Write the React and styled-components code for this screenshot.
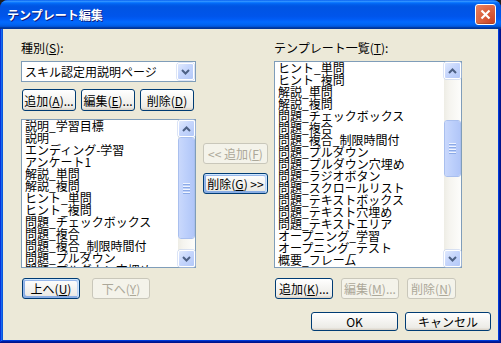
import React from 'react';
import styled, { createGlobalStyle } from 'styled-components';

const GlobalStyle = createGlobalStyle`
  html, body {
    margin: 0;
    padding: 0;
    background: #1e1e1e;
  }
  body {
    font-family: "Noto Sans CJK JP", "Noto Sans", sans-serif;
    font-size: 12px;
    color: #000;
  }
  #root {
    width: 501px;
    height: 343px;
  }
`;

const Window = styled.div`
  width: 501px;
  height: 343px;
  display: flex;
  flex-direction: column;
  border-radius: 8px 8px 0 0;
  overflow: hidden;
  background: #0831d9;
`;

const TitleBar = styled.div`
  flex: none;
  height: 29px;
  display: flex;
  align-items: center;
  justify-content: space-between;
  padding: 0 5px 0 7px;
  background: linear-gradient(180deg, #0058ee 0%, #3593ff 4%, #288eff 6%, #127dff 8%, #036ffc 10%, #0262ee 14%, #0057e5 20%, #0054e3 24%, #0055eb 56%, #005bf5 66%, #026afe 76%, #0062ef 86%, #0052d6 92%, #0040ab 94%, #003092 100%);
`;

const Title = styled.span`
  color: #fff;
  font-weight: bold;
  font-size: 12px;
  text-shadow: 1px 1px 0 #0f1b7a;
`;

const CloseButton = styled.div`
  width: 21px;
  height: 21px;
  box-sizing: border-box;
  border: 1px solid #fff;
  border-radius: 3px;
  display: flex;
  align-items: center;
  justify-content: center;
  background: radial-gradient(circle at 85% 85%, #cc4628 0%, #dc6542 55%, #e98567 100%);
  box-shadow: inset 0 -1px 1px rgba(0, 0, 0, 0.2);
`;

const Frame = styled.div`
  flex: 1;
  display: flex;
  padding: 0 3px 3px 3px;
  box-shadow: inset -1px -1px #00138c, inset 1px 0 #0831d9, inset -2px -2px #001ea0,
    inset 2px 0 #166aee, inset -3px -3px #003bda, inset 3px 0 #0855dd;
`;

const Body = styled.div`
  flex: 1;
  background: #ece9d8;
  display: flex;
  flex-direction: column;
  padding: 12px 7px 0 18px;
`;

const Main = styled.div`
  display: flex;
  align-items: flex-start;
`;

const Column = styled.div`
  display: flex;
  flex-direction: column;
  width: ${p => p.width}px;
  margin-left: ${p => p.offset || 0}px;
  padding-top: ${p => p.top || 0}px;
`;

const Label = styled.div`
  height: 14px;
  line-height: 14px;
  margin-bottom: 6px;
  white-space: nowrap;
`;

const Combo = styled.div`
  height: 21px;
  box-sizing: border-box;
  border: 1px solid #7f9db9;
  background: #fff;
  display: flex;
  align-items: center;
  justify-content: space-between;
  padding: 1px 1px 1px 3px;
  margin-bottom: 7px;
`;

const ComboText = styled.span`
  font-size: 12px;
  line-height: 17px;
  white-space: nowrap;
`;

const ArrowButton = styled.div`
  flex: none;
  width: 17px;
  height: 17px;
  box-sizing: border-box;
  border: 1px solid #fff;
  border-radius: 2px;
  display: flex;
  align-items: center;
  justify-content: center;
  background: linear-gradient(135deg, #e0e9fd 0%, #c6d6fc 45%, #b3c8f8 100%);
  box-shadow: 0 0 0 0.5px #b8c9ef;
`;

const ButtonRow = styled.div`
  display: flex;
  gap: ${p => p.gap || 6}px;
  margin-bottom: ${p => p.mb || 0}px;
  padding-left: ${p => p.pl || 0}px;
`;

const Button = styled.div`
  width: ${p => p.w}px;
  height: ${p => p.h || 21}px;
  box-sizing: border-box;
  border: 1px solid ${p => (p.disabled ? '#c9c7ba' : '#003c74')};
  border-radius: 3px;
  display: flex;
  align-items: center;
  justify-content: center;
  white-space: nowrap;
  font-size: 12px;
  color: ${p => (p.disabled ? '#aca899' : '#000')};
  background: ${p => (p.disabled ? '#f4f3ea' : 'linear-gradient(180deg, #fff, #ecebe6 86%, #d8d0c4)')};
  box-shadow: ${p =>
    p.focused
      ? 'inset -1px 1px #cee7ff, inset 1px 2px #98b8ea, inset -2px 2px #bcd4f6, inset 1px -1px #89ade4, inset 2px -2px #89ade4'
      : 'none'};
`;

const ListBox = styled.div`
  height: ${p => p.h}px;
  box-sizing: border-box;
  border: 1px solid #7f9db9;
  background: #fff;
  display: flex;
  margin-bottom: 10px;
`;

const Items = styled.div`
  flex: 1;
  overflow: hidden;
  padding-left: ${p => p.pl || 2}px;
`;

const Item = styled.div`
  height: 12px;
  line-height: 12px;
  font-size: 12px;
  white-space: nowrap;
`;

const ScrollBar = styled.div`
  flex: none;
  width: 17px;
  display: flex;
  flex-direction: column;
  background: linear-gradient(90deg, #eeede5 0%, #f5f4ef 30%, #fdfdfb 100%);
`;

const Track = styled.div`
  flex: 1;
  padding-top: ${p => p.offset}px;
`;

const Thumb = styled.div`
  height: ${p => p.size}px;
  box-sizing: border-box;
  border: 1px solid #fff;
  border-radius: 3px;
  outline: 1px solid #a9bfee;
  outline-offset: -1px;
  background: linear-gradient(90deg, #c9d8fc 0%, #bccffb 50%, #b1c6f8 100%);
  display: flex;
  flex-direction: column;
  align-items: center;
  justify-content: center;
  gap: 1px;
`;

const Grip = styled.div`
  width: 7px;
  height: 1px;
  background: #eef3fe;
  box-shadow: 0 1px 0 #8caae6;
  margin-bottom: 1px;
`;

const Footer = styled.div`
  display: flex;
  justify-content: flex-end;
  gap: 7px;
  margin-top: 13px;
`;

const Chevron = ({ up }) => (
  <svg width="9" height="6" viewBox="0 0 9 6">
    <path
      d={up ? 'M1 5 L4.5 1.5 L8 5' : 'M1 1 L4.5 4.5 L8 1'}
      fill="none"
      stroke="#4d6185"
      strokeWidth="2"
    />
  </svg>
);

const Scroll = ({ offset, size }) => (
  <ScrollBar>
    <ArrowButton><Chevron up /></ArrowButton>
    <Track offset={offset}>
      <Thumb size={size}>
        <Grip />
        <Grip />
        <Grip />
        <Grip />
      </Thumb>
    </Track>
    <ArrowButton><Chevron /></ArrowButton>
  </ScrollBar>
);

const leftItems = [
  '説明_学習目標',
  '説明',
  'エンディング-学習',
  'アンケート1',
  '解説_単問',
  '解説_複問',
  'ヒント_単問',
  'ヒント_複問',
  '問題_チェックボックス',
  '問題_複合',
  '問題_複合_制限時間付',
  '問題_プルダウン',
  '問題_プルダウン穴埋め',
];

const rightItems = [
  'ヒント_単問',
  'ヒント_複問',
  '解説_単問',
  '解説_複問',
  '問題_チェックボックス',
  '問題_複合',
  '問題_複合_制限時間付',
  '問題_プルダウン',
  '問題_プルダウン穴埋め',
  '問題_ラジオボタン',
  '問題_スクロールリスト',
  '問題_テキストボックス',
  '問題_テキスト穴埋め',
  '問題_テキストエリア',
  'オープニング_学習',
  'オープニング_テスト',
  '概要_フレーム',
];

export default function App() {
  return (
    <>
      <GlobalStyle />
      <Window>
        <TitleBar>
          <Title>テンプレート編集</Title>
          <CloseButton>
            <svg width="11" height="11" viewBox="0 0 11 11">
              <path d="M1.5 1.5 L9.5 9.5 M9.5 1.5 L1.5 9.5" stroke="#fff" strokeWidth="2.2" />
            </svg>
          </CloseButton>
        </TitleBar>
        <Frame>
          <Body>
            <Main>
              <Column width={175}>
                <Label>種別(<u>S</u>):</Label>
                <Combo>
                  <ComboText>スキル認定用説明ページ</ComboText>
                  <ArrowButton><Chevron /></ArrowButton>
                </Combo>
                <ButtonRow gap={5} mb={8} pl={1}>
                  <Button w={54} h={22}>追加(<u>A</u>)...</Button>
                  <Button w={54} h={22}>編集(<u>E</u>)...</Button>
                  <Button w={54} h={22}>削除(<u>D</u>)</Button>
                </ButtonRow>
                <ListBox h={149}>
                  <Items pl={3}>
                    {leftItems.map(t => <Item key={t}>{t}</Item>)}
                  </Items>
                  <Scroll offset={0} size={102} />
                </ListBox>
                <ButtonRow gap={12} pl={1}>
                  <Button w={58} focused>上へ(<u>U</u>)</Button>
                  <Button w={58} disabled>下へ(<u>Y</u>)</Button>
                </ButtonRow>
              </Column>
              <Column width={65} offset={7} top={102}>
                <ButtonRow mb={9}>
                  <Button w={65} disabled>&lt;&lt; 追加(<u>F</u>)</Button>
                </ButtonRow>
                <ButtonRow>
                  <Button w={65} focused>削除(<u>G</u>) &gt;&gt;</Button>
                </ButtonRow>
              </Column>
              <Column width={188} offset={6}>
                <Label>テンプレート一覧(<u>T</u>):</Label>
                <ListBox h={207}>
                  <Items pl={3}>
                    {rightItems.map(t => <Item key={t}>{t}</Item>)}
                  </Items>
                  <Scroll offset={41} size={57} />
                </ListBox>
                <ButtonRow gap={8} pl={1}>
                  <Button w={58}>追加(<u>K</u>)...</Button>
                  <Button w={58} disabled>編集(<u>M</u>)...</Button>
                  <Button w={49} disabled>削除(<u>N</u>)</Button>
                </ButtonRow>
              </Column>
            </Main>
            <Footer>
              <Button w={87} h={19}>OK</Button>
              <Button w={86} h={19}>キャンセル</Button>
            </Footer>
          </Body>
        </Frame>
      </Window>
    </>
  );
}
